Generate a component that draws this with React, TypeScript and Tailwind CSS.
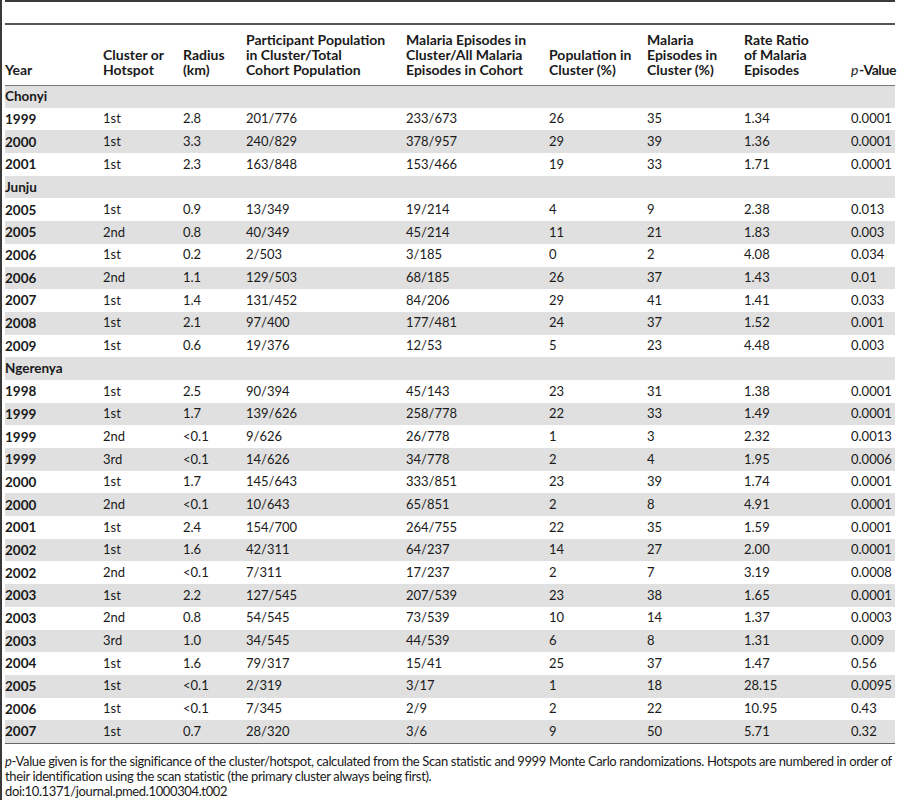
import React from "react";

type Row = { group?: string; y?: string; c?: string; r?: string; pp?: string; me?: string; pc?: string; mc?: string; rr?: string; p?: string };

const data: Row[] = [
  { group: "Chonyi" },
  { y: "1999", c: "1st", r: "2.8", pp: "201/776", me: "233/673", pc: "26", mc: "35", rr: "1.34", p: "0.0001" },
  { y: "2000", c: "1st", r: "3.3", pp: "240/829", me: "378/957", pc: "29", mc: "39", rr: "1.36", p: "0.0001" },
  { y: "2001", c: "1st", r: "2.3", pp: "163/848", me: "153/466", pc: "19", mc: "33", rr: "1.71", p: "0.0001" },
  { group: "Junju" },
  { y: "2005", c: "1st", r: "0.9", pp: "13/349", me: "19/214", pc: "4", mc: "9", rr: "2.38", p: "0.013" },
  { y: "2005", c: "2nd", r: "0.8", pp: "40/349", me: "45/214", pc: "11", mc: "21", rr: "1.83", p: "0.003" },
  { y: "2006", c: "1st", r: "0.2", pp: "2/503", me: "3/185", pc: "0", mc: "2", rr: "4.08", p: "0.034" },
  { y: "2006", c: "2nd", r: "1.1", pp: "129/503", me: "68/185", pc: "26", mc: "37", rr: "1.43", p: "0.01" },
  { y: "2007", c: "1st", r: "1.4", pp: "131/452", me: "84/206", pc: "29", mc: "41", rr: "1.41", p: "0.033" },
  { y: "2008", c: "1st", r: "2.1", pp: "97/400", me: "177/481", pc: "24", mc: "37", rr: "1.52", p: "0.001" },
  { y: "2009", c: "1st", r: "0.6", pp: "19/376", me: "12/53", pc: "5", mc: "23", rr: "4.48", p: "0.003" },
  { group: "Ngerenya" },
  { y: "1998", c: "1st", r: "2.5", pp: "90/394", me: "45/143", pc: "23", mc: "31", rr: "1.38", p: "0.0001" },
  { y: "1999", c: "1st", r: "1.7", pp: "139/626", me: "258/778", pc: "22", mc: "33", rr: "1.49", p: "0.0001" },
  { y: "1999", c: "2nd", r: "<0.1", pp: "9/626", me: "26/778", pc: "1", mc: "3", rr: "2.32", p: "0.0013" },
  { y: "1999", c: "3rd", r: "<0.1", pp: "14/626", me: "34/778", pc: "2", mc: "4", rr: "1.95", p: "0.0006" },
  { y: "2000", c: "1st", r: "1.7", pp: "145/643", me: "333/851", pc: "23", mc: "39", rr: "1.74", p: "0.0001" },
  { y: "2000", c: "2nd", r: "<0.1", pp: "10/643", me: "65/851", pc: "2", mc: "8", rr: "4.91", p: "0.0001" },
  { y: "2001", c: "1st", r: "2.4", pp: "154/700", me: "264/755", pc: "22", mc: "35", rr: "1.59", p: "0.0001" },
  { y: "2002", c: "1st", r: "1.6", pp: "42/311", me: "64/237", pc: "14", mc: "27", rr: "2.00", p: "0.0001" },
  { y: "2002", c: "2nd", r: "<0.1", pp: "7/311", me: "17/237", pc: "2", mc: "7", rr: "3.19", p: "0.0008" },
  { y: "2003", c: "1st", r: "2.2", pp: "127/545", me: "207/539", pc: "23", mc: "38", rr: "1.65", p: "0.0001" },
  { y: "2003", c: "2nd", r: "0.8", pp: "54/545", me: "73/539", pc: "10", mc: "14", rr: "1.37", p: "0.0003" },
  { y: "2003", c: "3rd", r: "1.0", pp: "34/545", me: "44/539", pc: "6", mc: "8", rr: "1.31", p: "0.009" },
  { y: "2004", c: "1st", r: "1.6", pp: "79/317", me: "15/41", pc: "25", mc: "37", rr: "1.47", p: "0.56" },
  { y: "2005", c: "1st", r: "<0.1", pp: "2/319", me: "3/17", pc: "1", mc: "18", rr: "28.15", p: "0.0095" },
  { y: "2006", c: "1st", r: "<0.1", pp: "7/345", me: "2/9", pc: "2", mc: "22", rr: "10.95", p: "0.43" },
  { y: "2007", c: "1st", r: "0.7", pp: "28/320", me: "3/6", pc: "9", mc: "50", rr: "5.71", p: "0.32" },
];

const widths = [98, 80, 63, 160, 143, 98, 97, 107, 44];

export default function App() {
  return (
    <div
      className="w-[897px] h-[800px] bg-white border-l-2 border-[#3a3a3a] overflow-hidden text-[#1a1a1a]"
      style={{ fontFamily: "Lato, 'Open Sans', sans-serif" }}
    >
      <div className="ml-[3px] w-[890px]">
        <div className="h-[2px] bg-[#3a3a3a]" />
        <div className="h-[21px]" />
        <table className="w-[890px] table-fixed border-collapse text-[13px]">
          <colgroup>
            {widths.map((w, i) => (
              <col key={i} style={{ width: w }} />
            ))}
          </colgroup>
          <thead>
            <tr className="border-t-2 border-b border-t-[#555] border-b-[#777]">
              {[
                ["Year"],
                ["Cluster or", "Hotspot"],
                ["Radius", "(km)"],
                ["Participant Population", "in Cluster/Total", "Cohort Population"],
                ["Malaria Episodes in", "Cluster/All Malaria", "Episodes in Cohort"],
                ["Population in", "Cluster (%)"],
                ["Malaria", "Episodes in", "Cluster (%)"],
                ["Rate Ratio", "of Malaria", "Episodes"],
              ].map((lines, i) => (
                <th key={i} className="h-[61px] align-bottom text-left font-bold text-[14px] leading-[15px] pb-[8px] pr-1">
                  {lines.map((l, j) => (
                    <div key={j} className="whitespace-nowrap">{l}</div>
                  ))}
                </th>
              ))}
              <th className="align-bottom text-left font-bold text-[14px] leading-[15px] pb-[8px] whitespace-nowrap tracking-[-0.4px]">
                <span className="italic font-normal pr-[1px]">p</span>-Value
              </th>
            </tr>
          </thead>
          <tbody>
            {data.map((row, i) => {
              const bg = i % 2 === 0 ? "bg-[#e0e0e0]" : "bg-white";
              if (row.group) {
                return (
                  <tr key={i} className={`${bg} h-[22.7px]`}>
                    <td colSpan={9} className="font-bold text-[13.5px] align-middle">{row.group}</td>
                  </tr>
                );
              }
              const cells = [row.c, row.r, row.pp, row.me, row.pc, row.mc, row.rr, row.p];
              return (
                <tr key={i} className={`${bg} h-[22.7px]`}>
                  <td className="font-bold text-[13.5px] align-middle">{row.y}</td>
                  {cells.map((c, j) => (
                    <td key={j} className="align-middle whitespace-nowrap">{c}</td>
                  ))}
                </tr>
              );
            })}
          </tbody>
        </table>
        <div className="border-t border-[#666]" />
        <div className="pt-[10px] text-[13px] leading-[15px] tracking-[-0.37px]">
          <p>
            <span className="italic">p</span>-Value given is for the significance of the cluster/hotspot, calculated from the Scan statistic and 9999 Monte Carlo randomizations. Hotspots are numbered in order of their identification using the scan statistic (the primary cluster always being first).
          </p>
          <p>doi:10.1371/journal.pmed.1000304.t002</p>
        </div>
      </div>
    </div>
  );
}
